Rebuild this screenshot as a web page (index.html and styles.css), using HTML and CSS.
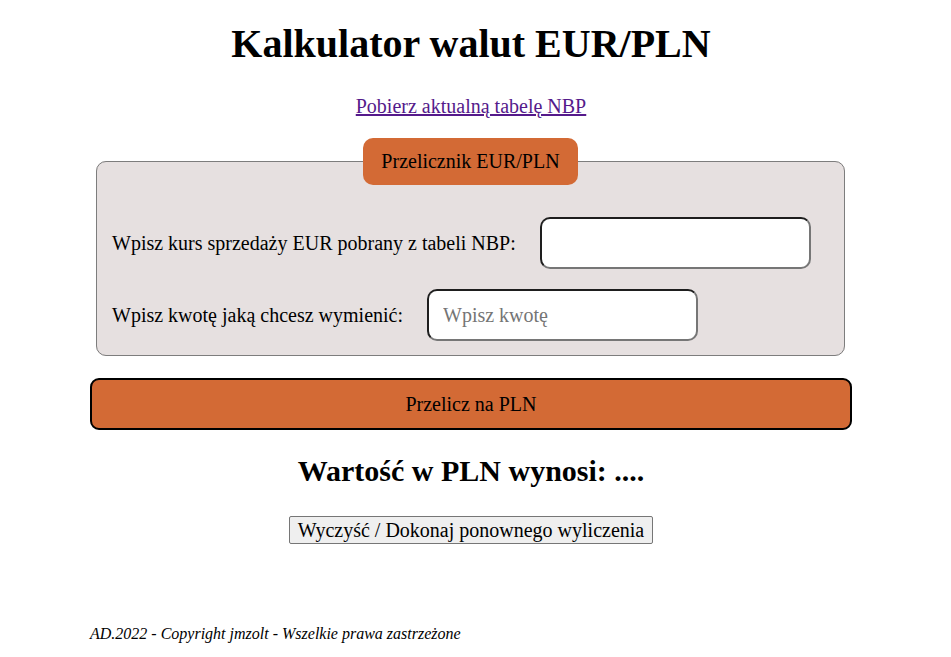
FILE: index.html
```html
<!DOCTYPE html>
<html lang="pl">
<head>
<meta charset="utf-8">
<title>Kalkulator walut EUR/PLN</title>
<link rel="stylesheet" href="styles.css">
</head>
<body>
<div class="page">
  <h1 class="title">Kalkulator walut EUR/PLN</h1>
  <p class="nbp"><a href="#" class="nbp-link">Pobierz aktualną tabelę NBP</a></p>
  <form class="calc">
    <fieldset class="box">
      <legend class="box-legend">Przelicznik EUR/PLN</legend>
      <div class="row">
        <label class="row-label" for="kurs">Wpisz kurs sprzedaży EUR pobrany z tabeli NBP:</label>
        <input class="field" id="kurs" type="text">
      </div>
      <div class="row">
        <label class="row-label" for="kwota">Wpisz kwotę jaką chcesz wymienić:</label>
        <input class="field" id="kwota" type="text" placeholder="Wpisz kwotę">
      </div>
    </fieldset>
    <button type="button" class="convert">Przelicz na PLN</button>
  </form>
  <h2 class="result">Wartość w PLN wynosi: ....</h2>
  <div class="reset-wrap"><button type="button" class="reset">Wyczyść / Dokonaj ponownego wyliczenia</button></div>
  <footer class="foot">AD.2022 - Copyright jmzolt - Wszelkie prawa zastrzeżone</footer>
</div>
</body>
</html>
```
FILE: styles.css
```css
html, body {
  background: #fff;
}
body {
  margin: 8px 17px 8px 8px;
  font-family: "Liberation Serif", "Times New Roman", serif;
  font-size: 20px;
  color: #000;
}
.page {
  width: 762px;
  margin: 0 auto;
}
.title {
  font-size: 40px;
  font-weight: bold;
  text-align: center;
  margin: 13px 0 0;
  line-height: 46px;
}
.nbp {
  text-align: center;
  margin: 28px 0 0;
  line-height: 23px;
}
.nbp-link {
  color: #551a8b;
  text-decoration: underline;
}
.calc {
  margin: 20px 0 0;
}
.box {
  margin: 0 7px 0 6px;
  padding: 0 15px 14px;
  background: #e6e0e0;
  border: 1px solid #7d7d7d;
  border-radius: 10px;
}
.box-legend {
  margin: 0 auto;
  padding: 12px 18px;
  background: #d36a35;
  border-radius: 10px;
  line-height: 23px;
}
.row {
  display: flex;
  align-items: center;
}
.row + .row {
  margin-top: 20px;
}
.box-legend + .row {
  margin-top: 32px;
}
.row-label {
  margin-right: 24px;
}
.field {
  box-sizing: border-box;
  width: 271px;
  height: 52px;
  padding: 0 14px;
  font-family: "Liberation Serif", "Times New Roman", serif;
  font-size: 20px;
  background: #fff;
  border: 2px solid;
  border-color: #1e1e1e #767676 #767676 #1e1e1e;
  border-radius: 10px;
  outline: none;
}
.field::placeholder {
  color: #757575;
}
.convert {
  display: block;
  box-sizing: border-box;
  width: 762px;
  height: 52px;
  margin: 22px 0 0;
  font-family: "Liberation Serif", "Times New Roman", serif;
  font-size: 20px;
  color: #000;
  background: #d36a35;
  border: 2px solid #000;
  border-radius: 9px;
}
.result {
  font-size: 30px;
  font-weight: bold;
  text-align: center;
  margin: 23px 0 0;
  line-height: 35px;
}
.reset-wrap {
  text-align: center;
  margin-top: 28px;
}
.reset {
  font-family: "Liberation Serif", "Times New Roman", serif;
  font-size: 20px;
  color: #000;
  background: #efefef;
  border: 1px solid #767676;
  border-radius: 2px;
  padding: 1px 8px;
  line-height: 24px;
}
.foot {
  margin-top: 81px;
  font-style: italic;
  font-size: 16px;
  line-height: 18px;
}
```
